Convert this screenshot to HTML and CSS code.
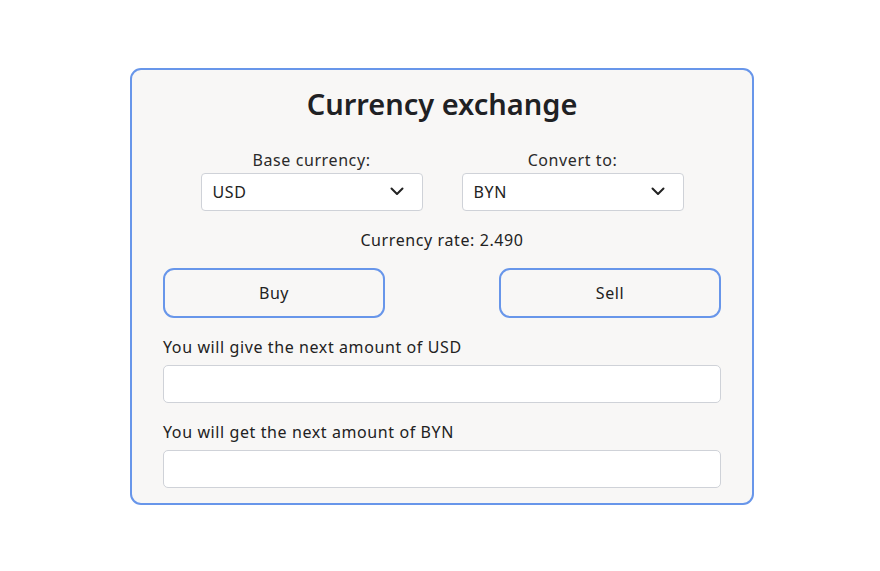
FILE: index.html
```html
<!DOCTYPE html>
<html lang="en">
<head>
<meta charset="utf-8">
<title>Currency exchange</title>
<link rel="stylesheet" href="styles.css">
</head>
<body>
<main class="card">
  <h1 class="title">Currency exchange</h1>
  <div class="selects">
    <label class="field">
      <span class="field-label">Base currency:</span>
      <span class="select">
        <span class="select-value">USD</span>
        <svg class="chevron" width="14" height="9" viewBox="0 0 14 9"><path d="M1.5 1.5 L7 7 L12.5 1.5" fill="none" stroke="#222" stroke-width="2" stroke-linecap="round" stroke-linejoin="round"/></svg>
      </span>
    </label>
    <label class="field">
      <span class="field-label">Convert to:</span>
      <span class="select">
        <span class="select-value">BYN</span>
        <svg class="chevron" width="14" height="9" viewBox="0 0 14 9"><path d="M1.5 1.5 L7 7 L12.5 1.5" fill="none" stroke="#222" stroke-width="2" stroke-linecap="round" stroke-linejoin="round"/></svg>
      </span>
    </label>
  </div>
  <p class="rate">Currency rate: 2.490</p>
  <div class="actions">
    <button class="btn" type="button">Buy</button>
    <button class="btn" type="button">Sell</button>
  </div>
  <label class="amount">
    <span class="amount-label">You will give the next amount of USD</span>
    <input class="input" type="text">
  </label>
  <label class="amount">
    <span class="amount-label">You will get the next amount of BYN</span>
    <input class="input" type="text">
  </label>
</main>
</body>
</html>
```
FILE: styles.css
```css
* { box-sizing: border-box; }
html, body { margin: 0; padding: 0; background: #fff; }
body {
  font-family: "Noto Sans", "Open Sans", sans-serif;
  color: #222;
  padding-top: 68px;
}
.card {
  width: 624px;
  height: 437px;
  margin: 0 0 0 130px;
  border: 2px solid #6896ea;
  border-radius: 11px;
  background: #f8f7f6;
  padding: 14px 31px 0;
  letter-spacing: 0.6px;
}
.title {
  margin: 0;
  text-align: center;
  font-size: 29px;
  font-weight: 600;
  line-height: 40px;
  color: #1f2124;
  letter-spacing: 0;
}
.selects {
  display: flex;
  justify-content: center;
  gap: 39px;
  margin-top: 26px;
}
.field {
  display: flex;
  flex-direction: column;
  align-items: center;
  width: 222px;
}
.field-label {
  font-size: 16px;
  line-height: 20px;
  color: #2a2a2a;
}
.select {
  margin-top: 3px;
  width: 222px;
  height: 38px;
  border: 1px solid #cfd2d8;
  border-radius: 4px;
  background: #fff;
  display: flex;
  align-items: center;
  justify-content: space-between;
  padding: 0 18px 0 11px;
}
.select-value { font-size: 16px; color: #222; }
.chevron { display: block; margin-top: -2px; }
.rate {
  margin: 18px 0 0;
  text-align: center;
  font-size: 16px;
  line-height: 22px;
}
.actions {
  display: flex;
  justify-content: space-between;
  margin-top: 17px;
}
.btn {
  width: 222px;
  height: 50px;
  border: 2px solid #6896ea;
  border-radius: 11px;
  background: transparent;
  font-family: inherit;
  letter-spacing: inherit;
  font-size: 16px;
  color: #222;
  padding: 0;
}
.amount {
  display: flex;
  flex-direction: column;
  margin-top: 18px;
}
.amount + .amount { margin-top: 18px; }
.amount-label {
  font-size: 16px;
  line-height: 22px;
}
.input {
  margin-top: 7px;
  height: 38px;
  border: 1px solid #cfd2d8;
  border-radius: 5px;
  background: #fff;
  font-family: inherit;
  font-size: 16px;
}
```
